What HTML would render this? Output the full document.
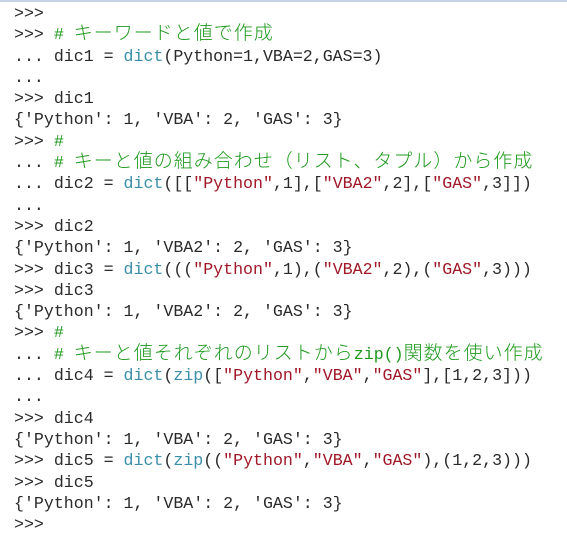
<!DOCTYPE html>
<html><head><meta charset="utf-8"><style>
html,body{margin:0;padding:0;background:#fff;}
body{width:567px;height:537px;overflow:hidden;border-top:2px solid #c8d4e4;box-sizing:border-box;}
pre{margin:0;padding:1px 0 0 14px;font-family:"Liberation Mono",monospace;font-size:16.6px;line-height:21.3px;color:#2a2a2a;}
.j{font-family:"Noto Sans CJK JP",sans-serif;font-size:19px;font-weight:300;line-height:0;letter-spacing:1px;}
.c{color:#1e9a1e;}
.b{color:#3a8ea8;}
.s{color:#a01828;}
</style></head><body><pre>&gt;&gt;&gt;
&gt;&gt;&gt; <span class="c"># <span class="j">キーワードと値で作成</span></span>
... dic1 = <span class="b">dict</span>(Python=1,VBA=2,GAS=3)
...
&gt;&gt;&gt; dic1
{'Python': 1, 'VBA': 2, 'GAS': 3}
&gt;&gt;&gt; <span class="c">#</span>
... <span class="c"># <span class="j">キーと値の組み合わせ（リスト、タプル）から作成</span></span>
... dic2 = <span class="b">dict</span>([[<span class="s">"Python"</span>,1],[<span class="s">"VBA2"</span>,2],[<span class="s">"GAS"</span>,3]])
...
&gt;&gt;&gt; dic2
{'Python': 1, 'VBA2': 2, 'GAS': 3}
&gt;&gt;&gt; dic3 = <span class="b">dict</span>(((<span class="s">"Python"</span>,1),(<span class="s">"VBA2"</span>,2),(<span class="s">"GAS"</span>,3)))
&gt;&gt;&gt; dic3
{'Python': 1, 'VBA2': 2, 'GAS': 3}
&gt;&gt;&gt; <span class="c">#</span>
... <span class="c"># <span class="j">キーと値それぞれのリストから</span>zip()<span class="j">関数を使い作成</span></span>
... dic4 = <span class="b">dict</span>(<span class="b">zip</span>([<span class="s">"Python"</span>,<span class="s">"VBA"</span>,<span class="s">"GAS"</span>],[1,2,3]))
...
&gt;&gt;&gt; dic4
{'Python': 1, 'VBA': 2, 'GAS': 3}
&gt;&gt;&gt; dic5 = <span class="b">dict</span>(<span class="b">zip</span>((<span class="s">"Python"</span>,<span class="s">"VBA"</span>,<span class="s">"GAS"</span>),(1,2,3)))
&gt;&gt;&gt; dic5
{'Python': 1, 'VBA': 2, 'GAS': 3}
&gt;&gt;&gt;</pre></body></html>
